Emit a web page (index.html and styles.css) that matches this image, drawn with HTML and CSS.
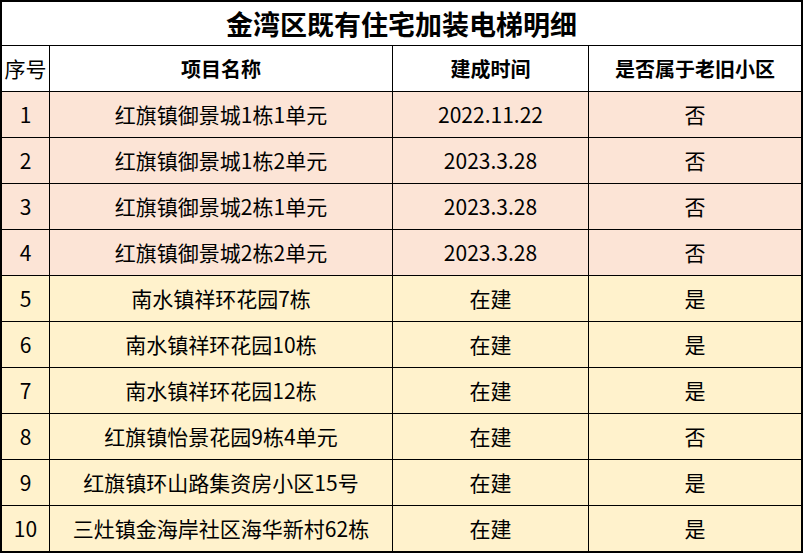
FILE: index.html
```html
<!DOCTYPE html>
<html lang="zh-CN">
<head>
<meta charset="utf-8">
<title>金湾区既有住宅加装电梯明细</title>
<link rel="stylesheet" href="styles.css">
</head>
<body>
<div class="sheet">
  <div class="cell title">金湾区既有住宅加装电梯明细</div>

  <div class="cell head plain">序号</div>
  <div class="cell head">项目名称</div>
  <div class="cell head">建成时间</div>
  <div class="cell head">是否属于老旧小区</div>

  <div class="cell pink">1</div><div class="cell pink">红旗镇御景城1栋1单元</div><div class="cell pink">2022.11.22</div><div class="cell pink">否</div>
  <div class="cell pink">2</div><div class="cell pink">红旗镇御景城1栋2单元</div><div class="cell pink">2023.3.28</div><div class="cell pink">否</div>
  <div class="cell pink">3</div><div class="cell pink">红旗镇御景城2栋1单元</div><div class="cell pink">2023.3.28</div><div class="cell pink">否</div>
  <div class="cell pink">4</div><div class="cell pink">红旗镇御景城2栋2单元</div><div class="cell pink">2023.3.28</div><div class="cell pink">否</div>

  <div class="cell yellow">5</div><div class="cell yellow">南水镇祥环花园7栋</div><div class="cell yellow">在建</div><div class="cell yellow">是</div>
  <div class="cell yellow">6</div><div class="cell yellow">南水镇祥环花园10栋</div><div class="cell yellow">在建</div><div class="cell yellow">是</div>
  <div class="cell yellow">7</div><div class="cell yellow">南水镇祥环花园12栋</div><div class="cell yellow">在建</div><div class="cell yellow">是</div>
  <div class="cell yellow">8</div><div class="cell yellow">红旗镇怡景花园9栋4单元</div><div class="cell yellow">在建</div><div class="cell yellow">否</div>
  <div class="cell yellow">9</div><div class="cell yellow">红旗镇环山路集资房小区15号</div><div class="cell yellow">在建</div><div class="cell yellow">是</div>
  <div class="cell yellow">10</div><div class="cell yellow">三灶镇金海岸社区海华新村62栋</div><div class="cell yellow">在建</div><div class="cell yellow">是</div>
</div>
</body>
</html>
```

FILE: styles.css
```css
html, body {
  margin: 0;
  padding: 0;
  background: #ffffff;
}

body {
  font-family: "Noto Sans CJK SC", "Noto Sans", sans-serif;
  color: #000000;
}

.sheet {
  width: 799px;
  border: 2px solid #000000;
  background: #000000;
  display: grid;
  grid-template-columns: 47px 342px 195px 212px;
  grid-template-rows: 43px repeat(11, 45px);
  gap: 1px;
}

.cell {
  display: flex;
  align-items: center;
  justify-content: center;
  font-size: 21px;
  line-height: 1;
  white-space: nowrap;
  background: #ffffff;
}

.title {
  grid-column: 1 / 5;
  font-size: 27px;
  font-weight: 700;
}

.head {
  font-size: 20px;
  font-weight: 700;
}

.head.plain {
  font-weight: 400;
  font-size: 21px;
}

.pink {
  background: #fce4d6;
}

.yellow {
  background: #fff2cc;
}
```
